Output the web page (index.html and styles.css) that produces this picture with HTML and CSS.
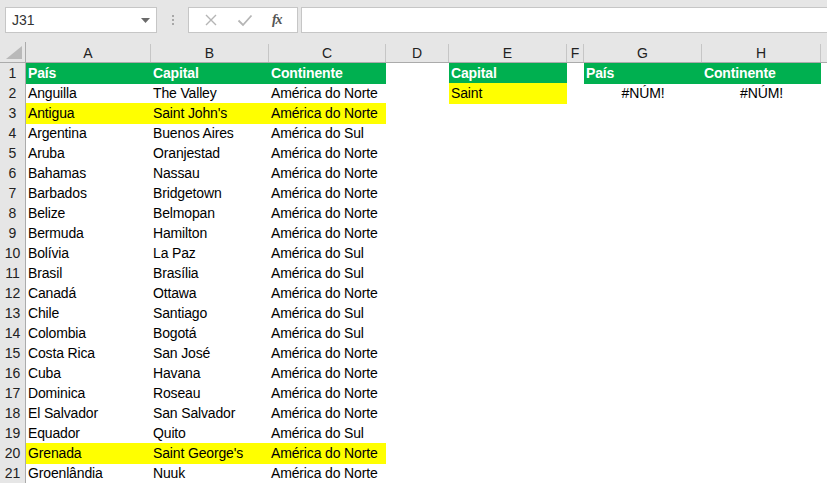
FILE: index.html
```html
<!DOCTYPE html>
<html>
<head>
<meta charset="utf-8">
<link rel="stylesheet" href="styles.css">
</head>
<body>
<div class="toolbar">
  <div class="namebox"><span class="ref">J31</span><svg class="dd" width="9" height="5" viewBox="0 0 9 5"><path d="M0 0h9L4.5 5z" fill="#6a6a6a"/></svg></div>
  <div class="grip"><i></i><i></i><i></i></div>
  <div class="fbtns">
    <svg width="14" height="14" viewBox="0 0 14 14"><path d="M2 2L12 12M12 2L2 12" stroke="#b5b5b5" stroke-width="1.4" fill="none"/></svg>
    <svg width="16" height="14" viewBox="0 0 16 14"><path d="M1.5 7.5L6 12L14.5 2.5" stroke="#b5b5b5" stroke-width="1.8" fill="none"/></svg>
    <span class="fx">fx</span>
  </div>
  <div class="finput"></div>
</div>
<div class="sheet">
  <div class="row hdr"><div class="corner"><svg width="16" height="13" viewBox="0 0 16 13"><path d="M16 0V13H0z" fill="#b9b9b9"/></svg></div><div class="ch">A</div><div class="ch">B</div><div class="ch">C</div><div class="ch">D</div><div class="ch">E</div><div class="ch">F</div><div class="ch">G</div><div class="ch">H</div><div class="ch last"></div></div>
  <div class="row"><div class="rh">1</div><div class="c g">País</div><div class="c g">Capital</div><div class="c g">Continente</div><div class="c"></div><div class="c g">Capital</div><div class="c"></div><div class="c g">País</div><div class="c g">Continente</div><div class="c"></div></div>
  <div class="row"><div class="rh">2</div><div class="c">Anguilla</div><div class="c">The Valley</div><div class="c">América do Norte</div><div class="c"></div><div class="c y">Saint</div><div class="c"></div><div class="c ctr">#NÚM!</div><div class="c ctr">#NÚM!</div><div class="c"></div></div>
  <div class="row"><div class="rh">3</div><div class="c y">Antigua</div><div class="c y">Saint John's</div><div class="c y">América do Norte</div><div class="c"></div><div class="c"></div><div class="c"></div><div class="c"></div><div class="c"></div><div class="c"></div></div>
  <div class="row"><div class="rh">4</div><div class="c">Argentina</div><div class="c">Buenos Aires</div><div class="c">América do Sul</div><div class="c"></div><div class="c"></div><div class="c"></div><div class="c"></div><div class="c"></div><div class="c"></div></div>
  <div class="row"><div class="rh">5</div><div class="c">Aruba</div><div class="c">Oranjestad</div><div class="c">América do Norte</div><div class="c"></div><div class="c"></div><div class="c"></div><div class="c"></div><div class="c"></div><div class="c"></div></div>
  <div class="row"><div class="rh">6</div><div class="c">Bahamas</div><div class="c">Nassau</div><div class="c">América do Norte</div><div class="c"></div><div class="c"></div><div class="c"></div><div class="c"></div><div class="c"></div><div class="c"></div></div>
  <div class="row"><div class="rh">7</div><div class="c">Barbados</div><div class="c">Bridgetown</div><div class="c">América do Norte</div><div class="c"></div><div class="c"></div><div class="c"></div><div class="c"></div><div class="c"></div><div class="c"></div></div>
  <div class="row"><div class="rh">8</div><div class="c">Belize</div><div class="c">Belmopan</div><div class="c">América do Norte</div><div class="c"></div><div class="c"></div><div class="c"></div><div class="c"></div><div class="c"></div><div class="c"></div></div>
  <div class="row"><div class="rh">9</div><div class="c">Bermuda</div><div class="c">Hamilton</div><div class="c">América do Norte</div><div class="c"></div><div class="c"></div><div class="c"></div><div class="c"></div><div class="c"></div><div class="c"></div></div>
  <div class="row"><div class="rh">10</div><div class="c">Bolívia</div><div class="c">La Paz</div><div class="c">América do Sul</div><div class="c"></div><div class="c"></div><div class="c"></div><div class="c"></div><div class="c"></div><div class="c"></div></div>
  <div class="row"><div class="rh">11</div><div class="c">Brasil</div><div class="c">Brasília</div><div class="c">América do Sul</div><div class="c"></div><div class="c"></div><div class="c"></div><div class="c"></div><div class="c"></div><div class="c"></div></div>
  <div class="row"><div class="rh">12</div><div class="c">Canadá</div><div class="c">Ottawa</div><div class="c">América do Norte</div><div class="c"></div><div class="c"></div><div class="c"></div><div class="c"></div><div class="c"></div><div class="c"></div></div>
  <div class="row"><div class="rh">13</div><div class="c">Chile</div><div class="c">Santiago</div><div class="c">América do Sul</div><div class="c"></div><div class="c"></div><div class="c"></div><div class="c"></div><div class="c"></div><div class="c"></div></div>
  <div class="row"><div class="rh">14</div><div class="c">Colombia</div><div class="c">Bogotá</div><div class="c">América do Sul</div><div class="c"></div><div class="c"></div><div class="c"></div><div class="c"></div><div class="c"></div><div class="c"></div></div>
  <div class="row"><div class="rh">15</div><div class="c">Costa Rica</div><div class="c">San José</div><div class="c">América do Norte</div><div class="c"></div><div class="c"></div><div class="c"></div><div class="c"></div><div class="c"></div><div class="c"></div></div>
  <div class="row"><div class="rh">16</div><div class="c">Cuba</div><div class="c">Havana</div><div class="c">América do Norte</div><div class="c"></div><div class="c"></div><div class="c"></div><div class="c"></div><div class="c"></div><div class="c"></div></div>
  <div class="row"><div class="rh">17</div><div class="c">Dominica</div><div class="c">Roseau</div><div class="c">América do Norte</div><div class="c"></div><div class="c"></div><div class="c"></div><div class="c"></div><div class="c"></div><div class="c"></div></div>
  <div class="row"><div class="rh">18</div><div class="c">El Salvador</div><div class="c">San Salvador</div><div class="c">América do Norte</div><div class="c"></div><div class="c"></div><div class="c"></div><div class="c"></div><div class="c"></div><div class="c"></div></div>
  <div class="row"><div class="rh">19</div><div class="c">Equador</div><div class="c">Quito</div><div class="c">América do Sul</div><div class="c"></div><div class="c"></div><div class="c"></div><div class="c"></div><div class="c"></div><div class="c"></div></div>
  <div class="row"><div class="rh">20</div><div class="c y">Grenada</div><div class="c y">Saint George's</div><div class="c y">América do Norte</div><div class="c"></div><div class="c"></div><div class="c"></div><div class="c"></div><div class="c"></div><div class="c"></div></div>
  <div class="row"><div class="rh">21</div><div class="c">Groenlândia</div><div class="c">Nuuk</div><div class="c">América do Norte</div><div class="c"></div><div class="c"></div><div class="c"></div><div class="c"></div><div class="c"></div><div class="c"></div></div>
</div>
</body>
</html>
```
FILE: styles.css
```css
html, body {
  margin: 0;
  padding: 0;
  background: #ffffff;
  overflow: hidden;
}
body {
  font-family: "Liberation Sans", Arial, sans-serif;
  font-size: 14px;
  color: #000;
  width: 827px;
  height: 483px;
}
.toolbar {
  height: 42px;
  background: #e6e6e6;
  display: flex;
  align-items: flex-start;
  padding-top: 7px;
  box-sizing: border-box;
}
.namebox {
  margin-left: 5px;
  width: 152px;
  height: 26px;
  box-sizing: border-box;
  background: #fff;
  border: 1px solid #c6c6c6;
  display: flex;
  align-items: center;
  justify-content: space-between;
  padding: 0 6px 0 6px;
  font-size: 14px;
  color: #333;
}
.namebox .dd { margin-top: 1px; }
.grip {
  width: 31px;
  height: 26px;
  display: flex;
  flex-direction: column;
  align-items: center;
  justify-content: center;
  gap: 2px;
}
.grip i {
  display: block;
  width: 2px;
  height: 2px;
  background: #a8a8a8;
}
.fbtns {
  width: 110px;
  height: 26px;
  box-sizing: border-box;
  background: #fff;
  border: 1px solid #c6c6c6;
  display: flex;
  align-items: center;
  justify-content: space-around;
  padding: 0 6px 0 6px;
}
.fx {
  font-family: "Liberation Serif", serif;
  font-style: italic;
  font-weight: bold;
  font-size: 14px;
  color: #555;
  letter-spacing: -1px;
}
.finput {
  margin-left: 3px;
  flex: 1;
  height: 26px;
  box-sizing: border-box;
  background: #fff;
  border: 1px solid #c6c6c6;
  border-right: none;
}
.row {
  display: grid;
  grid-template-columns: 26px 125px 118px 117px 63px 118px 17px 118px 119px 1fr;
  height: 20px;
}
.hdr {
  background: #e6e6e6;
  border-bottom: 1px solid #ababab;
  box-sizing: border-box;
  height: 21px;
}
.corner {
  border-right: 1px solid #ababab;
  display: flex;
  align-items: flex-end;
  justify-content: flex-end;
  padding: 0 3px 3px 0;
}
.ch {
  border-right: 1px solid #c6c6c6;
  margin-top: 2px;
  text-align: center;
  line-height: 18px;
  font-size: 14px;
  color: #222;
}
.ch.last { border-right: none; }
.rh {
  background: #e6e6e6;
  border-right: 1px solid #ababab;
  border-bottom: 1px solid #d4d4d4;
  box-sizing: border-box;
  text-align: center;
  line-height: 20px;
  font-size: 14px;
  color: #222;
}
.c {
  line-height: 21px;
  padding-left: 2px;
  white-space: nowrap;
  overflow: hidden;
  letter-spacing: -0.15px;
}
.g {
  background: #00b050;
  color: #fff;
  font-weight: bold;
}
.y {
  background: #ffff00;
}
.ctr {
  text-align: center;
  padding-left: 0;
}
```
